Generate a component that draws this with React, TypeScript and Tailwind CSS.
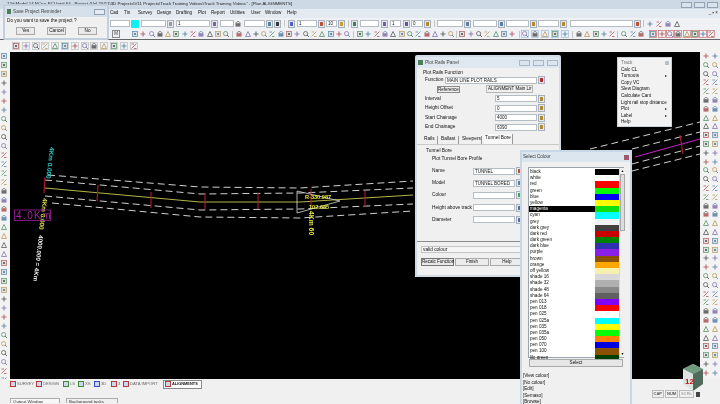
import React from 'react';

const P = ['#a84a4a', '#4a7a9f', '#4a8a5a', '#b8924a', '#4c4c4c', '#7f68a8'];

function Ico({ n, frame }: { n: number; frame?: string }) {
  const c = P[(n * 5 + 2) % 6];
  const d = P[(n * 3 + 4) % 6];
  const k = (n * 7 + (n >> 2)) % 6;
  return (
    <svg viewBox="0 0 8 8" className="w-[8px] h-[8px] shrink-0 opacity-80">
      {frame && <rect x="0.5" y="0.5" width="7" height="7" fill="#eef1f5" stroke={frame} strokeWidth="0.7" />}
      {k === 0 && <path d="M1.5 6.5 L4 1.5 L6.5 6.5 Z" fill="none" stroke={c} strokeWidth="0.9" />}
      {k === 1 && <><rect x="1.5" y="1.5" width="5" height="5" fill="#ddd" stroke={c} strokeWidth="0.8" /><rect x="3" y="3" width="2" height="2" fill={d} /></>}
      {k === 2 && <path d="M1.5 4 H6.5 M4 1.5 V6.5" stroke={c} strokeWidth="1.1" />}
      {k === 3 && <><circle cx="3.6" cy="3.6" r="2.1" fill="none" stroke={c} strokeWidth="0.9" /><path d="M5 5 L7 7" stroke={d} strokeWidth="1" /></>}
      {k === 4 && <path d="M1.5 6.5 L6.5 1.5 M1.5 2 H4 M4 6.5 H6.5" stroke={c} strokeWidth="0.9" />}
      {k === 5 && <><rect x="1.5" y="3.2" width="5" height="3.4" fill={c} /><path d="M1.5 3 L4 1.3 L6.5 3" fill="none" stroke={d} strokeWidth="0.8" /></>}
    </svg>
  );
}

function Icons({ from, count, gap = 'gap-[0.3px]', frame }: { from: number; count: number; gap?: string; frame?: string }) {
  return (
    <div className={`flex ${gap}`}>
      {Array.from({ length: count }).map((_, i) => (
        <Ico key={i} n={from + i} frame={frame} />
      ))}
    </div>
  );
}

function Inp({ w, v, ml }: { w: string; v?: string; ml?: string }) {
  return (
    <div className={`${w} ${ml ?? ''} h-[7px] shrink-0 bg-white border border-[#b4bcc4] text-[4.5px] leading-[5px] pl-[1px] text-[#111] overflow-hidden whitespace-nowrap`}>
      {v}
    </div>
  );
}

function Pick({ color = '#b08a30', ml }: { color?: string; ml?: string }) {
  return (
    <div className={`w-[7px] h-[8px] shrink-0 ${ml ?? ''} bg-[#e6ebf1] border border-[#a6b0ba] flex items-center justify-center`}>
      <div className="w-[3px] h-[4px]" style={{ background: color }} />
    </div>
  );
}

const Sep = ({ ml, mr }: { ml: string; mr: string }) => <div className={`w-[1px] h-[7px] bg-[#c4c4c4] shrink-0 ${ml} ${mr}`} />;

const TRACK: [string, boolean][] = [
  ['Calc CL', false], ['Turnouts', true], ['Copy VC', false], ['Slew Diagram', false], ['Calculate Cant', false],
  ['Light rail stop distance', false], ['Plot', true], ['Label', true], ['Help', false],
];

const COLOURS: [string, string][] = [
  ['black', '#000000'], ['white', '#ffffff'], ['red', '#ff0000'], ['green', '#00ff00'], ['blue', '#0000ff'], ['yellow', '#ffff00'],
  ['magenta', '#10e010'], ['cyan', '#00ffff'], ['grey', '#f2f2f2'], ['dark grey', '#404040'], ['dark red', '#c80000'], ['dark green', '#008000'],
  ['dark blue', '#3030b0'], ['purple', '#8a20e8'], ['brown', '#8a5200'], ['orange', '#ffa500'], ['off yellow', '#f5f0b0'], ['shade 16', '#d8d8d8'],
  ['shade 32', '#b0b0b0'], ['shade 48', '#888888'], ['shade 64', '#606060'], ['pen 013', '#8000ff'], ['pen 018', '#ff0000'], ['pen 025', '#ffffff'],
  ['pen 025a', '#00ffff'], ['pen 035', '#ffff00'], ['pen 035a', '#00ff00'], ['pen 050', '#ff8000'], ['pen 070', '#0000e0'], ['pen 100', '#8a5200'], ['lilc green', '#004000'],
];

function CtrlBtn() {
  return <div className="w-[11px] h-[6px] border border-[#a8b7c6] bg-[#dbe5ee]" />;
}

function Canvas() {
  const white = '#e8e8e8';
  const ticks = [[45, 178, 44, 194], [98, 186, 97, 202], [151, 193, 151, 209], [205, 194, 205, 210], [258, 194, 258, 210], [311, 190, 311, 208], [365, 192, 365, 208], [680, 136, 683, 155]];
  const f = 'Liberation Sans';
  return (
    <svg viewBox="10 53 690 327" className="w-full h-full block">
      <g fill="none" stroke={white} strokeWidth="0.9" strokeDasharray="7 4">
        <path d="M48 176 L200 188 L300 189 L413 182" />
        <path d="M45 181 L200 195 L300 194 L413 189" />
        <path d="M45 197 L200 211 L300 210 L413 205" />
        <path d="M52 204 L200 218 L300 219 L413 212" />
        <path d="M590 150 L700 123" />
        <path d="M632 150 L700 133" />
        <path d="M632 165 L700 147" />
        <path d="M632 172 L700 155" />
      </g>
      <path d="M45 189 L200 203 L300 203 L413 196" fill="none" stroke="#c8c850" strokeWidth="0.9" />
      <path d="M635 158 L700 140" fill="none" stroke="#c020c0" strokeWidth="1.1" />
      <g stroke="#b01c2c" strokeWidth="1.1">
        {ticks.map((t, i) => <line key={i} x1={t[0]} y1={t[1]} x2={t[2]} y2={t[3]} />)}
      </g>
      <path d="M297 192 L297 214 L340 202 Z" fill="none" stroke="#d8d8d8" strokeWidth="0.8" />
      <text x="305" y="200" fill="#e8e840" fontSize="5.6" fontWeight="700" fontFamily={f}>R-330.987</text>
      <text x="309" y="210" fill="#e8e840" fontSize="5.6" fontWeight="700" fontFamily={f}>102.685</text>
      <text transform="translate(309 212) rotate(90)" fill="#e8e840" fontSize="6.8" fontWeight="700" fontFamily={f}>4Km 60</text>
      <text transform="translate(50 148) rotate(97)" fill="#30d0d0" fontSize="6.4" fontWeight="700" fontFamily={f}>4Km 0.000</text>
      <text transform="translate(43 199) rotate(97)" fill="#e0e050" fontSize="6.4" fontWeight="700" fontFamily={f}>4Km 0.000</text>
      <text transform="translate(39 236) rotate(97)" fill="#f0f0f0" fontSize="6.2" fontWeight="700" fontFamily={f}>4000.000 = 4Km</text>
      <rect x="14.5" y="211" width="36" height="10.5" fill="none" stroke="#a020a0" strokeWidth="0.8" />
      <text x="16" y="220" fill="#a020a0" fontSize="10" letterSpacing="1.4" fontFamily={f}>4.0Km</text>
    </svg>
  );
}

function Field({ label, v, c }: { label: string; v?: string; c?: string }) {
  return (
    <div className="flex items-center h-[9.5px]">
      <div className="w-[70px] shrink-0 whitespace-nowrap">{label}</div>
      <Inp w="w-[42px]" v={v} />
      <Pick color={c} ml="ml-[1px]" />
    </div>
  );
}

function BoreField({ label, v, c }: { label: string; v?: string; c: string }) {
  return (
    <div className="flex items-center h-[12.2px]">
      <div className="w-[41px] shrink-0 whitespace-nowrap">{label}</div>
      <Inp w="w-[42px]" v={v} />
      <Pick color={c} ml="ml-[1px]" />
    </div>
  );
}

function PlotPanel() {
  return (
    <div className="absolute left-[415px] top-[55px] w-[146px] h-[222px] bg-[#f0f0f0] border-[2px] border-[#cfdbe6] rounded-t-[2px] text-[4.8px] leading-[6px] text-[#111] flex flex-col overflow-hidden">
      <div className="h-[11px] flex items-center bg-[#dfe8f0] pl-[1px] pr-[1px] shrink-0">
        <div className="w-[5px] h-[5px] bg-[#4a7f5a] mr-[2px]" />
        <span className="text-[#444]">Plot Rails Panel</span>
        <div className="ml-auto flex gap-[3px]"><CtrlBtn /><CtrlBtn /><CtrlBtn /></div>
      </div>
      <div className="pl-[6px] pt-[2px] h-[8px] shrink-0">Plot Rails Function</div>
      <div className="flex items-center h-[8px] pl-[8px] shrink-0">
        <div className="w-[20px]">Function</div>
        <Inp w="w-[92px]" v="MAIN LINE PLOT RAILS" />
        <Pick color="#b03030" ml="ml-[1px]" />
      </div>
      <div className="flex items-center h-[10px] pl-[20px] shrink-0">
        <div className="w-[23px] h-[7px] bg-[#eeeeee] border border-[#8a8a8a] text-center text-[4.5px] leading-[5px]">Reference</div>
        <div className="ml-[26px] w-[47px] h-[8px] border border-[#b5b5b5] text-[4.5px] leading-[6px] pl-[1px] whitespace-nowrap">ALIGNMENT Main Lir</div>
      </div>
      <div className="pl-[8px] shrink-0">
        <Field label="Interval" v="5" />
        <Field label="Height Offset" v="0" />
        <Field label="Start Chainage" v="4000" />
        <Field label="End Chainage" v="6390" />
      </div>
      <div className="flex items-end h-[13px] pl-[6px] gap-[2px] border-b border-[#c9c9c9] shrink-0 whitespace-nowrap">
        <div className="w-[15px] h-[8px] border-r border-[#999] pl-[1px]">Rails</div>
        <div className="w-[19px] h-[8px] border-r border-[#999] pl-[1px]">Ballast</div>
        <div className="w-[21px] h-[8px] border-r border-[#999] pl-[1px]">Sleepers</div>
        <div className="w-[29px] h-[10px] bg-[#f8f8f8] border-r border-[#999] pl-[1px] pt-[1px]">Tunnel Bore</div>
      </div>
      <div className="pl-[9px] pt-[3px] h-[8px] shrink-0">Tunnel Bore</div>
      <div className="pl-[15px] pt-[3px] h-[12px] shrink-0">Plot Tunnel Bore Profile</div>
      <div className="pl-[15px] shrink-0">
        <BoreField label="Name" v="TUNNEL" c="#c05030" />
        <BoreField label="Model" v="TUNNEL BORED" c="#5a7f9f" />
        <BoreField label="Colour" c="#4aa060" />
        <BoreField label="Height above track" c="#5a6f9f" />
        <BoreField label="Diameter" c="#5a6f9f" />
      </div>
      <div className="mt-[15px] border-t border-[#8c8c8c] shrink-0" />
      <div className="ml-[4px] mt-[4px] w-[100px] h-[7px] border border-[#c4c4c4] bg-[#f6f6f6] leading-[5px] pl-[1px] shrink-0">valid colour</div>
      <div className="flex pl-[4px] mt-[5px] gap-[1px] shrink-0">
        <div className="w-[33px] h-[8px] border border-[#777] bg-[#e8e8e8] text-center text-[4.5px] leading-[6px] whitespace-nowrap">Recalc Function</div>
        <div className="w-[34px] h-[8px] border border-[#aaa] bg-[#ececec] text-center text-[4.5px] leading-[6px]">Finish</div>
        <div className="w-[34px] h-[8px] border border-[#aaa] bg-[#ececec] text-center text-[4.5px] leading-[6px]">Help</div>
      </div>
    </div>
  );
}

function ColourPanel() {
  return (
    <div className="absolute left-[520px] top-[150px] w-[112px] h-[254px] bg-[#f0f0f0] border-[2px] border-b-0 border-[#c8d8e6] text-[4.6px] leading-[6px] text-[#111] flex flex-col overflow-hidden">
      <div className="h-[10px] flex items-center justify-between bg-[#dbe6ef] pl-[1px] pr-[1px] shrink-0">
        <span className="text-[#333]">Select Colour</span>
        <div className="w-[5px] h-[5px] bg-[#a05a6a]" />
      </div>
      <div className="mx-[6px] mt-[5px] h-[191px] border border-[#9aa4ae] bg-white flex shrink-0">
        <div className="flex-1 flex flex-col pt-[1px]">
          {COLOURS.map(([name, col]) => (
            <div key={name} className="h-[6.2px] flex shrink-0 overflow-hidden">
              <div className={`w-[66px] pl-[1px] leading-[6px] ${name === 'magenta' ? 'bg-black text-white' : ''}`}>{name}</div>
              <div className="w-[24px]" style={{ background: col }} />
            </div>
          ))}
        </div>
        <div className="w-[6px] bg-[#f0f0f0] border-l border-[#d8d8d8] flex flex-col items-center">
          <div className="text-[3.5px] leading-[6px]">▲</div>
          <div className="w-[5px] h-[57px] bg-[#dcdcdc] border border-[#a8a8a8]" />
          <div className="mt-auto text-[3.5px] leading-[6px]">▼</div>
        </div>
      </div>
      <div className="mx-[7px] mt-[1px] h-[8px] border border-[#aaa] bg-[#e6e6e6] text-center leading-[6px] shrink-0">Select</div>
      <div className="pl-[1px] pt-[6px] flex flex-col shrink-0">
        {['[View colour]', '[No colour]', '[Edit]', '[Semaso]', '[Browse]'].map((t) => (
          <div key={t} className="h-[6.5px]">{t}</div>
        ))}
      </div>
    </div>
  );
}

function SaveDialog() {
  return (
    <div className="absolute left-[3px] top-[4px] w-[106px] h-[36px] bg-[#f0f0f0] border-[2px] border-[#c3d0dc] rounded-[2px] text-[4.7px] leading-[6px] text-[#111] flex flex-col">
      <div className="h-[11px] flex items-center bg-[#d5e0ea] pl-[2px] pr-[2px] shrink-0">
        <div className="w-[4px] h-[5px] bg-[#4a7f5a] mr-[2px]" />
        <span className="text-[#444]">Save Project Reminder</span>
        <div className="ml-auto w-[11px] h-[6px] border border-[#8fa0b0] bg-[#e4ebf2]" />
      </div>
      <div className="pl-[2px] mt-[1px]">Do you want to save the project ?</div>
      <div className="flex pl-[11px] mt-[3px] gap-[12px]">
        {['Yes', 'Cancel', 'No'].map((t) => (
          <div key={t} className="w-[19px] h-[8px] border border-[#aaa] bg-[#eaeaea] text-center leading-[6px]">{t}</div>
        ))}
      </div>
    </div>
  );
}

function TrackMenu() {
  return (
    <div className="absolute left-[617px] top-[57px] w-[55px] h-[70px] bg-[#f2f2f2] border border-[#c8d0d8] text-[4.6px] leading-[6.6px] text-[#111] flex flex-col pl-[3px] pt-[2px]">
      <div className="flex items-center justify-between pr-[2px] h-[7px] text-[#777]">
        <span>Track</span>
        <div className="w-[4px] h-[4px] bg-[#b8c0c8]" />
      </div>
      {TRACK.map(([t, sub]) => (
        <div key={t} className="flex justify-between items-center pr-[4px] h-[6.6px] whitespace-nowrap">
          <span>{t}</span>
          {sub && <span className="text-[4px]">▸</span>}
        </div>
      ))}
    </div>
  );
}

function Tab({ t, c, w }: { t: string; c: string; w: string }) {
  return (
    <div className={`flex items-center gap-[1px] ${w} shrink-0`}>
      <div className={`w-[6px] h-[6px] border ${c} bg-[#cdd6ea] shrink-0`} />
      <span>{t}</span>
    </div>
  );
}

export default function App() {
  return (
    <div className="relative w-[720px] h-[404px] overflow-hidden bg-[#f0f0f0] text-[#333] flex flex-col [font-family:'Liberation_Sans',sans-serif] blur-[0.25px]">
      <div className="h-[9px] shrink-0 bg-[#cdd9e5] flex items-center pl-[7px] pr-[2px] text-[4.4px] text-[#222] whitespace-nowrap">
        <span>12d Model 14 NCivs PCI Intel 64 - Project (Vol 2\V11\3D Projects\V11 Projects\Track Training Videos\Track Training Videos" - [Plan ALIGNMENTS]</span>
        <div className="ml-auto flex gap-[2px]">
          <div className="w-[11px] h-[6px] border border-[#93a3b3] bg-[#d9e3ec]" />
          <div className="w-[11px] h-[6px] border border-[#93a3b3] bg-[#d9e3ec]" />
          <div className="w-[11px] h-[6px] border border-[#93a3b3] bg-[#d9e3ec]" />
        </div>
      </div>
      <div className="h-[9px] shrink-0 bg-[#e4eaf1] flex items-center pl-[110px] pr-[2px] text-[4.6px] text-[#111] whitespace-nowrap">
        <div className="w-[14px] shrink-0">Cad</div>
        <div className="w-[14px] shrink-0">Tin</div>
        <div className="w-[19px] shrink-0">Survey</div>
        <div className="w-[19px] shrink-0">Design</div>
        <div className="w-[22px] shrink-0">Drafting</div>
        <div className="w-[13px] shrink-0">Plot</div>
        <div className="w-[19px] shrink-0">Report</div>
        <div className="w-[21px] shrink-0">Utilities</div>
        <div className="w-[14px] shrink-0">User</div>
        <div className="w-[22px] shrink-0">Window</div>
        <div className="w-[16px] shrink-0">Help</div>
        <div className="ml-auto text-[4.5px] text-[#333]">_ ▪ ×</div>
      </div>
      <div className="h-[11px] shrink-0 bg-[#eff1f4] flex items-center pl-[110px] whitespace-nowrap">
        <Inp w="w-[20px]" />
        <div className="w-[8px] h-[8px] bg-[#10f0f0] rounded-[1px] ml-[1px] shrink-0" />
        <Inp w="w-[25px]" ml="ml-[2px]" />
        <Pick ml="ml-[1px]" color="#999" />
        <Inp w="w-[34px]" ml="ml-[2px]" v="1" />
        <Pick ml="ml-[1px]" color="#8060a0" />
        <Inp w="w-[14px]" ml="ml-[2px]" />
        <Ico n={4} />
        <Inp w="w-[21px]" ml="ml-[2px]" />
        <Pick ml="ml-[1px]" color="#5a7f9f" />
        <Pick ml="ml-[1px]" color="#333" />
        <Sep ml="ml-[3px]" mr="mr-[3px]" />
        <Pick color="#5060c0" />
        <Inp w="w-[20px]" ml="ml-[2px]" v="1" />
        <Pick ml="ml-[1px]" color="#c05030" />
        <Inp w="w-[11px]" ml="ml-[1px]" v="10" />
        <Pick ml="ml-[1px]" color="#c0a030" />
        <Sep ml="ml-[3px]" mr="mr-[2px]" />
        <Pick color="#408050" />
        <Inp w="w-[19px]" ml="ml-[2px]" />
        <Pick ml="ml-[2px]" color="#7060a0" />
        <Inp w="w-[11px]" ml="ml-[2px]" v="1" />
        <Pick ml="ml-[2px]" color="#6050b0" />
        <Inp w="w-[12px]" ml="ml-[1px]" v="0" />
        <Pick ml="ml-[1px]" color="#b08a30" />
        <Sep ml="ml-[3px]" mr="mr-[2px]" />
        <Inp w="w-[26px]" />
        <Pick ml="ml-[1px]" color="#5a7f9f" />
        <Inp w="w-[24px]" ml="ml-[2px]" />
        <Pick ml="ml-[1px]" color="#5a7f9f" />
        <Inp w="w-[23px]" ml="ml-[1px]" />
        <Pick ml="ml-[1px]" color="#b08a30" />
        <Inp w="w-[21px]" ml="ml-[1px]" />
        <Pick ml="ml-[1px]" color="#b08a30" />
        <Inp w="w-[63px]" ml="ml-[3px]" />
        <Pick ml="ml-[1px]" color="#c05030" />
        <Sep ml="ml-[2px]" mr="mr-[2px]" />
        <Icons from={7} count={4} gap="gap-[1px]" />
      </div>
      <div className="h-[11px] shrink-0 bg-[#eff1f4] border-b border-[#666] flex items-center pl-[112px] whitespace-nowrap overflow-hidden">
        <div className="w-[8px] h-[8px] border border-[#888] text-[4.5px] leading-[6px] text-center shrink-0">M</div>
        <div className="ml-[11px]"><Icons from={1} count={12} /></div>
        <Sep ml="ml-[2px]" mr="mr-[2px]" />
        <Icons from={14} count={14} />
        <Sep ml="ml-[2px]" mr="mr-[2px]" />
        <Icons from={30} count={12} />
        <Sep ml="ml-[1px]" mr="mr-[1px]" />
        <Icons from={44} count={7} />
        <Sep ml="ml-[3px]" mr="mr-[1px]" />
        <Icons from={3} count={5} gap="gap-[2px]" frame="#8fb0d0" />
        <Sep ml="ml-[3px]" mr="mr-[2px]" />
        <Icons from={52} count={5} />
        <Sep ml="ml-[1px]" mr="mr-[2px]" />
        <Icons from={60} count={3} gap="gap-[0.5px]" />
        <div className="ml-[4px]"><Icons from={1} count={8} gap="gap-[0.3px]" frame="#c05050" /></div>
      </div>
      <div className="h-[12px] shrink-0 bg-[#f3f3f3] flex items-center pl-[12px] gap-[1.8px]">
        {Array.from({ length: 13 }).map((_, i) => <Ico key={i} n={i + 20} frame="#b0b0b0" />)}
      </div>
      <div className="flex h-[327px] shrink-0">
        <div className="w-[10px] shrink-0 bg-[#f3f3f3] flex flex-col items-start gap-[1px] overflow-hidden">
          {Array.from({ length: 37 }).map((_, i) => <Ico key={i} n={i * 5 + 1} />)}
        </div>
        <div className="flex-1 bg-black relative">
          <Canvas />
          <svg viewBox="0 0 20 27" className="absolute right-[-3px] bottom-[-12px] w-[20px] h-[27px]">
            <path d="M10 0 L20 5 L20 20 L10 27 L0 20 L0 5 Z" fill="#dfe3df" />
            <path d="M10 0 L20 5 L10 10 L0 5 Z" fill="#6f9a80" />
            <path d="M10 10 L20 5 L20 20 L10 27 Z" fill="#4f6a5a" />
            <text x="2" y="20" fontSize="8" fill="#c01818" fontWeight="700" fontFamily="Liberation Sans">12</text>
          </svg>
        </div>
        <div className="w-[20px] shrink-0 bg-[#f3f3f3] grid grid-cols-2 gap-y-[0.8px] pl-[1px] content-start overflow-hidden">
          {Array.from({ length: 74 }).map((_, i) => <div key={i} className="w-[9px] flex justify-center"><Ico n={i * 5 + 2} /></div>)}
        </div>
      </div>
      <div className="h-[10px] shrink-0 flex items-center pl-[10px] text-[4.2px] text-[#666] whitespace-nowrap">
        <Tab t="SURVEY" c="border-[#b23a3a]" w="w-[26px]" />
        <Tab t="DESIGN" c="border-[#b23a3a]" w="w-[27px]" />
        <Tab t="LS" c="border-[#3a8a3a]" w="w-[15px]" />
        <Tab t="XS" c="border-[#3a8a3a]" w="w-[16px]" />
        <Tab t="3D" c="border-[#3050c0]" w="w-[17px]" />
        <Tab t="3" c="border-[#b23a3a]" w="w-[12px]" />
        <Tab t="DATA IMPORT" c="border-[#b23a3a]" w="w-[40px]" />
        <div className="flex items-center gap-[1px] h-[9px] w-[39px] px-[1px] bg-white border border-[#888] font-bold text-[3.9px] text-[#111]">
          <div className="w-[6px] h-[6px] border border-[#b23a3a] bg-[#cdd6ea] shrink-0" />
          <span>ALIGNMENTS</span>
        </div>
      </div>
      <div className="h-[14px] shrink-0 relative flex items-end pl-[10px] gap-[6px] text-[4.4px] text-[#333]">
        <div className="w-[50px] h-[5px] border border-b-0 border-[#aaa] pl-[2px] leading-[5px] overflow-hidden bg-[#f8f8f8]">Output Window</div>
        <div className="w-[52px] h-[5px] border border-b-0 border-[#aaa] pl-[2px] leading-[5px] overflow-hidden">Background tasks</div>
        <div className="absolute right-[20px] top-[1px] flex items-center gap-[1px] text-[4px] leading-[6px] font-bold text-[#555]">
          <div className="border border-[#bbb] px-[1px]">CAP</div>
          <div className="border border-[#bbb] px-[1px]">NUM</div>
          <div className="border border-[#bbb] px-[1px] text-[#aaa]">SCRL</div>
          <div className="w-[4px] h-[5px] bg-[#444] ml-[1px]" />
        </div>
      </div>
      <SaveDialog />
      <TrackMenu />
      <PlotPanel />
      <ColourPanel />
    </div>
  );
}
